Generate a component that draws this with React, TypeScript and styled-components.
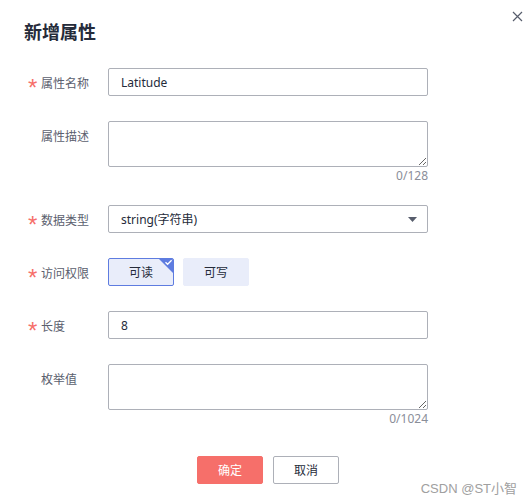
import React, { useState } from 'react';
import styled, { createGlobalStyle } from 'styled-components';

const GlobalStyle = createGlobalStyle`
  body {
    margin: 0;
    background: #ffffff;
    font-family: "Noto Sans", "Noto Sans CJK SC", sans-serif;
  }
`;

const Dialog = styled.div`
  position: relative;
  width: 532px;
  height: 504px;
  box-sizing: border-box;
  padding: 20px 24px 0 24px;
  background: #ffffff;
`;

const Title = styled.h2`
  margin: 0;
  font-size: 18px;
  line-height: 24px;
  font-weight: 700;
  color: #252b3a;
`;

const CloseButton = styled.button`
  position: absolute;
  top: 10px;
  right: 9px;
  width: 12px;
  height: 12px;
  padding: 0;
  border: none;
  background: transparent;
  display: flex;
  align-items: center;
  justify-content: center;
  cursor: pointer;
`;

const Form = styled.div`
  margin-top: 24px;
  display: flex;
  flex-direction: column;
  gap: 25px;
`;

const Row = styled.div`
  display: grid;
  grid-template-columns: 84px 320px;
  align-items: start;
`;

const Label = styled.div`
  display: flex;
  align-items: center;
  height: 28px;
  padding-top: 2px;
  box-sizing: border-box;
  font-size: 12px;
  color: #5b606e;
`;

const Star = styled.span<{ $on: boolean }>`
  display: inline-block;
  width: 13px;
  height: 12px;
  margin-left: 4px;
  font-family: "Liberation Sans", sans-serif;
  font-size: 24px;
  line-height: 24px;
  color: #f66f6a;
  transform: translateY(-1px);
  visibility: ${(p) => (p.$on ? 'visible' : 'hidden')};
`;

const TextInput = styled.input`
  box-sizing: border-box;
  width: 100%;
  height: 28px;
  margin: 0;
  padding: 0 12px;
  border: 1px solid #adb0b8;
  border-radius: 2px;
  font-family: inherit;
  font-size: 12px;
  color: #252b3a;
  outline: none;
`;

const TextArea = styled.textarea`
  display: block;
  box-sizing: border-box;
  width: 100%;
  height: 46px;
  margin: 0;
  padding: 4px 12px;
  border: 1px solid #adb0b8;
  border-radius: 2px;
  font-family: inherit;
  font-size: 12px;
  color: #252b3a;
  outline: none;
  resize: vertical;
`;

const Counter = styled.div`
  text-align: right;
  font-size: 12px;
  line-height: 18px;
  margin-bottom: -5px;
  color: #8a8e99;
`;

const Select = styled.div`
  box-sizing: border-box;
  height: 28px;
  padding: 0 10px 0 12px;
  border: 1px solid #adb0b8;
  border-radius: 2px;
  display: flex;
  align-items: center;
  justify-content: space-between;
  font-size: 12px;
  color: #252b3a;
  cursor: pointer;
`;

const Choices = styled.div`
  display: flex;
  gap: 9px;
`;

const Choice = styled.button<{ $active: boolean }>`
  position: relative;
  box-sizing: border-box;
  width: 66px;
  height: 28px;
  padding: 0;
  border: 1px solid ${(p) => (p.$active ? '#5e7ce0' : '#e9edfa')};
  border-radius: 2px;
  background: #e9edfa;
  font-family: inherit;
  font-size: 12px;
  color: #252b3a;
  overflow: hidden;
  cursor: pointer;
`;

const Corner = styled.svg`
  position: absolute;
  top: 0;
  right: 0;
`;

const Footer = styled.div`
  margin-top: 33px;
  padding-left: 4px;
  display: flex;
  justify-content: center;
  gap: 10px;
`;

const Button = styled.button<{ $primary?: boolean }>`
  box-sizing: border-box;
  width: 66px;
  height: 28px;
  padding: 0;
  border-radius: 2px;
  border: 1px solid ${(p) => (p.$primary ? '#f66f6a' : '#adb0b8')};
  background: ${(p) => (p.$primary ? '#f66f6a' : '#ffffff')};
  color: ${(p) => (p.$primary ? '#ffffff' : '#252b3a')};
  font-family: inherit;
  font-size: 12px;
  cursor: pointer;
`;

const Watermark = styled.div`
  position: absolute;
  right: 15px;
  bottom: 7px;
  font-family: "Liberation Sans", "Noto Sans CJK SC", sans-serif;
  font-size: 13px;
  color: #a0a0a0;
`;

const FieldLabel = ({ text, required }: { text: string; required?: boolean }) => (
  <Label>
    <Star $on={!!required}>*</Star>
    {text}
  </Label>
);

const Check = () => (
  <Corner width="14" height="14" viewBox="0 0 14 14">
    <path d="M0 0 H14 V14 Z" fill="#5e7ce0" />
    <path d="M6.5 3.2 L8.6 5.3 L12.6 1.3" stroke="#ffffff" strokeWidth="1.3" fill="none" />
  </Corner>
);

export default function App() {
  const [name, setName] = useState('Latitude');
  const [desc, setDesc] = useState('');
  const [len, setLen] = useState('8');
  const [enumVal, setEnumVal] = useState('');
  const [access, setAccess] = useState('read');

  return (
    <>
      <GlobalStyle />
      <Dialog>
        <Title>新增属性</Title>
        <CloseButton aria-label="close">
          <svg width="11" height="11" viewBox="0 0 11 11">
            <path d="M1 1 L10 10 M10 1 L1 10" stroke="#575d6c" strokeWidth="1.2" fill="none" />
          </svg>
        </CloseButton>

        <Form>
          <Row>
            <FieldLabel text="属性名称" required />
            <TextInput value={name} onChange={(e) => setName(e.target.value)} />
          </Row>

          <Row>
            <FieldLabel text="属性描述" />
            <div>
              <TextArea value={desc} maxLength={128} onChange={(e) => setDesc(e.target.value)} />
              <Counter>{desc.length}/128</Counter>
            </div>
          </Row>

          <Row>
            <FieldLabel text="数据类型" required />
            <Select>
              <span>string(字符串)</span>
              <svg width="9" height="5" viewBox="0 0 9 5">
                <path d="M0 0 H9 L4.5 5 Z" fill="#575d6c" />
              </svg>
            </Select>
          </Row>

          <Row>
            <FieldLabel text="访问权限" required />
            <Choices>
              <Choice $active={access === 'read'} onClick={() => setAccess('read')}>
                可读
                {access === 'read' && <Check />}
              </Choice>
              <Choice $active={access === 'write'} onClick={() => setAccess('write')}>
                可写
                {access === 'write' && <Check />}
              </Choice>
            </Choices>
          </Row>

          <Row>
            <FieldLabel text="长度" required />
            <TextInput value={len} onChange={(e) => setLen(e.target.value)} />
          </Row>

          <Row>
            <FieldLabel text="枚举值" />
            <div>
              <TextArea value={enumVal} maxLength={1024} onChange={(e) => setEnumVal(e.target.value)} />
              <Counter>{enumVal.length}/1024</Counter>
            </div>
          </Row>
        </Form>

        <Footer>
          <Button $primary>确定</Button>
          <Button>取消</Button>
        </Footer>

        <Watermark>CSDN @ST小智</Watermark>
      </Dialog>
    </>
  );
}
